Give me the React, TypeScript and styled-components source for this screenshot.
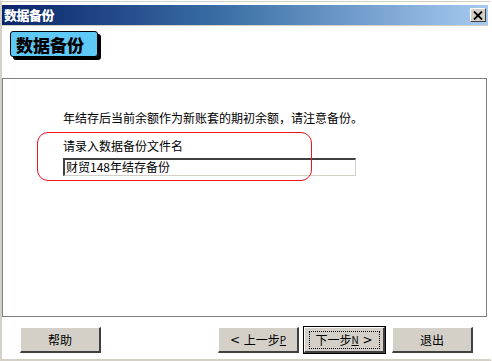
import React from "react";
import styled, { createGlobalStyle } from "styled-components";

const Global = createGlobalStyle`
  html, body {
    margin: 0;
    padding: 0;
    background: #ffffff;
  }
  body {
    font-family: "Noto Sans CJK SC", "DejaVu Sans", sans-serif;
    font-size: 12px;
  }
`;

const Window = styled.div`
  width: 492px;
  height: 361px;
  box-sizing: border-box;
  display: flex;
  flex-direction: column;
  background: #ffffff;
  border-top: 1px solid #ffffff;
  border-left: 2px solid #d4d0c8;
  border-right: 2px solid #ffffff;
  border-bottom: 2px solid #d4d0c8;
  padding-top: 4px;
  box-shadow: inset 0 1px 0 #d4d0c8;
`;

const TitleBar = styled.div`
  height: 20px;
  margin-right: 2px;
  display: flex;
  align-items: center;
  justify-content: space-between;
  padding: 0 2px 0 2px;
  background: linear-gradient(to right, #0a246a 0%, #3a6ea5 45%, #a6caf0 100%);
  border-bottom: 1px solid #d4d0c8;
`;

const TitleText = styled.span`
  color: #ffffff;
  font-weight: 900;
  font-size: 13px;
  line-height: 14px;
  letter-spacing: -0.5px;
`;

const CloseButton = styled.div`
  width: 16px;
  height: 14px;
  box-sizing: border-box;
  background: #d4d0c8;
  border-top: 1px solid #ffffff;
  border-left: 1px solid #ffffff;
  border-right: 1px solid #404040;
  border-bottom: 1px solid #404040;
  display: flex;
  align-items: center;
  justify-content: center;
`;

const Header = styled.div`
  height: 52px;
  padding: 5px 0 0 8px;
  box-sizing: border-box;
`;

const Badge = styled.div`
  display: inline-flex;
  align-items: center;
  height: 26px;
  width: 88px;
  padding-left: 5px;
  box-sizing: border-box;
  background: #5ec8f7;
  border: 1px solid #000000;
  border-radius: 3px;
  box-shadow: 3px 3px 0 #000000;
  font-size: 17px;
  font-weight: 900;
  color: #000000;
`;

const Panel = styled.div`
  position: relative;
  height: 239px;
  margin-right: 3px;
  box-sizing: border-box;
  border: 1px solid #808080;
  padding: 31px 0 0 60px;
  display: flex;
  flex-direction: column;
`;

const Line = styled.div<{ $gap?: number }>`
  font-size: 12px;
  line-height: 16px;
  color: #000000;
  margin-top: ${(p) => p.$gap ?? 0}px;
`;

const TextBox = styled.div`
  width: 293px;
  height: 18px;
  box-sizing: border-box;
  margin-top: 4px;
  border-top: 2px solid #404040;
  border-left: 2px solid #404040;
  border-right: 1px solid #d4d0c8;
  border-bottom: 1px solid #d4d0c8;
  font-size: 12px;
  line-height: 14px;
  padding-left: 1px;
  color: #000000;
`;

const Highlight = styled.div`
  position: absolute;
  left: 34px;
  top: 53px;
  width: 275px;
  height: 49px;
  box-sizing: border-box;
  border: 1px solid #e8141e;
  border-radius: 11px;
`;

const Footer = styled.div`
  flex: 1;
  display: flex;
  align-items: flex-start;
  padding: 10px 0 0 18px;
`;

const Button = styled.div<{ $focus?: boolean }>`
  width: 81px;
  height: 26px;
  box-sizing: border-box;
  display: flex;
  align-items: center;
  justify-content: center;
  background: #d4d0c8;
  font-size: 12px;
  color: #000000;
  border-top: 1px solid #ffffff;
  border-left: 1px solid #ffffff;
  border-right: 2px solid #404040;
  border-bottom: 2px solid #404040;
  box-shadow: ${(p) => (p.$focus ? "0 0 0 1px #000000" : "none")};
  white-space: pre;
`;

const FocusRing = styled.span`
  display: flex;
  align-items: center;
  justify-content: center;
  width: 71px;
  height: 18px;
  box-sizing: border-box;
  border: 1px dotted #000000;
  white-space: pre;
`;

const Spacer = styled.div<{ $w: number }>`
  width: ${(p) => p.$w}px;
  flex-shrink: 0;
`;

const Key = styled.span`
  text-decoration: underline;
  font-size: 10px;
`;

const Arrow = styled.span`
  font-family: "DejaVu Sans", sans-serif;
  font-size: 12px;
`;

export default function App() {
  return (
    <>
      <Global />
      <Window>
        <TitleBar>
          <TitleText>数据备份</TitleText>
          <CloseButton>
            <svg width="10" height="9" viewBox="0 0 10 9">
              <path d="M1 0.5 L9 8.5 M9 0.5 L1 8.5" stroke="#000" strokeWidth="1.8" />
            </svg>
          </CloseButton>
        </TitleBar>
        <Header>
          <Badge>数据备份</Badge>
        </Header>
        <Panel>
          <Line>年结存后当前余额作为新账套的期初余额，请注意备份。</Line>
          <Line $gap={12}>请录入数据备份文件名</Line>
          <TextBox>财贸148年结存备份</TextBox>
          <Highlight />
        </Panel>
        <Footer>
          <Button>帮助</Button>
          <Spacer $w={117} />
          <Button>
            <Arrow>&lt; </Arrow>上一步<Key>P</Key>
          </Button>
          <Spacer $w={5} />
          <Button $focus>
            <FocusRing>
              下一步<Key>N</Key>
              <Arrow> &gt;</Arrow>
            </FocusRing>
          </Button>
          <Spacer $w={7} />
          <Button>退出</Button>
        </Footer>
      </Window>
    </>
  );
}
